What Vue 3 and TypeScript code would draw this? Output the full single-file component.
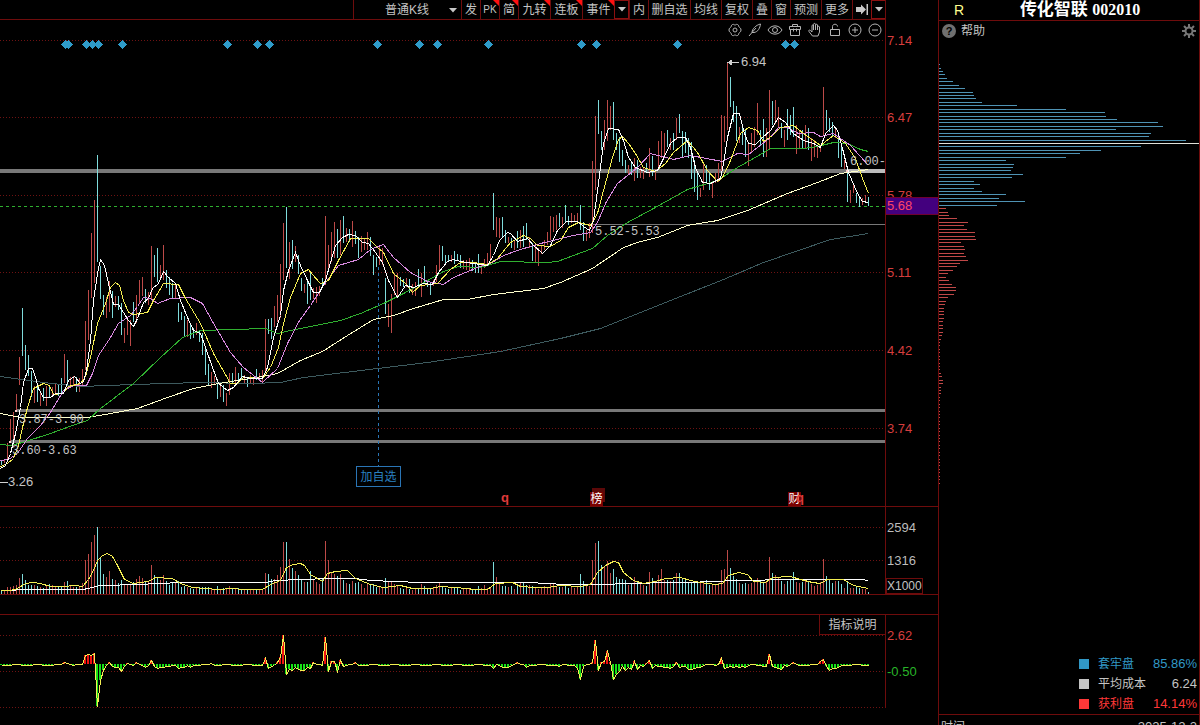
<script setup lang="ts">
type Pt = [number, number]

const tools = [
  { text: '发', size: 'one' }, { text: 'PK', size: 'one', hot: true }, { text: '简', size: 'one', hot: true },
  { text: '九转', size: 'two', hot: true }, { text: '连板', size: 'two', hot: true }, { text: '事件', size: 'two', hot: true },
  { text: '▼', size: 'drop' }, { text: '内', size: 'one' }, { text: '删自选', size: 'three' }, { text: '均线', size: 'two' },
  { text: '复权', size: 'two' }, { text: '叠', size: 'one' }, { text: '窗', size: 'one' }, { text: '预测', size: 'two' },
  { text: '更多', size: 'two' }, { text: '→', size: 'one' }, { text: '▼', size: 'drop' },
]

/* One token per trading day: direction, top of the bar, bottom of the bar. */
const candleText = `c460-465 r459-463 r443-462 r419-443 r412-447 r394-412 r357-385 c308-356 c345-370 c355-376
c371-397 r386-403 c385-402 r393-406 c388-401 r386-406 c385-397 r387-397 r383-395 c385-396
c378-393 r354-383 c360-385 r377-387 r376-385 c377-392 r378-392 r369-385 r321-370 r290-340
r233-298 r200-283 c155-262 c266-299 c295-315 r297-318 r281-312 c291-318 r296-307 c296-310
c303-335 r328-343 r320-335 r320-346 c302-322 r295-323 r280-303 r277-296 c289-303 r292-305
r246-300 c255-277 c248-282 r265-280 r245-280 c270-288 c277-295 c283-299 r283-298 c303-322
c312-320 c316-337 r320-337 c323-339 c328-338 r323-335 c330-342 c333-355 c346-375 c364-386
r372-388 r376-385 c382-399 r385-397 c385-402 r393-406 r373-395 c373-383 r367-383 c373-382
c368-380 r375-384 c377-387 r375-383 r377-385 c369-380 r373-380 r370-384 r319-373 c319-334
c318-339 r306-327 r295-322 r264-318 r223-280 c207-268 r242-279 c240-269 r246-262 c255-274
c278-291 r284-293 c282-304 c273-300 r288-299 r287-303 r286-296 c278-287 r216-285 r245-268
r232-262 r222-258 c229-258 r220-255 c216-243 r228-242 c229-242 r221-247 c231-244 c237-258
r236-252 r238-250 r232-250 c237-256 c255-275 c257-267 r245-265 r248-265 c278-314 r304-327
r294-333 r273-295 r273-297 c277-286 c279-287 r278-287 c279-293 r284-295 r282-296 c269-287
r273-297 c266-283 c280-287 c282-295 r280-286 r265-282 r245-270 c246-261 c255-263 c255-262
r255-262 c251-264 c254-261 c255-268 r260-269 r260-270 r258-270 c260-271 c262-273 c254-273
r263-274 r259-268 r253-266 r244-260 c193-230 r217-237 r218-238 c217-237 c230-243 r237-243
c238-248 r240-250 c231-248 r230-248 c226-247 c223-240 r237-248 c243-261 r244-262 r248-266
r245-254 r240-250 r232-245 r216-240 r217-232 r215-230 c213-227 r217-228 c205-223 c216-225
r213-223 r215-222 r213-223 c205-230 c222-241 r230-241 r223-238 r161-233 r116-190 c100-134
c131-150 r120-150 r100-141 r106-130 c102-140 c133-150 c137-162 c150-166 c160-173 r165-175
c163-175 r158-181 c160-178 r167-178 r168-179 c163-173 r148-177 c156-176 r169-180 r141-168
r131-158 r133-155 c130-147 r138-150 c133-150 r118-140 c114-133 c131-158 c132-153 c138-158
c142-179 c160-192 c172-200 r188-197 r162-190 c165-183 c172-190 r183-198 r173-183 r163-182
r115-172 r116-142 r63-130 c77-107 c101-122 c106-141 r127-143 c127-145 c130-157 r143-166
r133-153 r127-147 r103-135 c130-145 c119-157 r128-157 r90-150 c101-125 r100-124 r107-128
c123-138 r130-147 c109-140 c115-135 c107-137 r125-154 r130-148 c130-148 r125-148 c128-150
r138-161 r140-157 r147-158 r145-152 r87-135 c110-130 c118-132 c122-137 r129-138 c138-158
c143-167 r160-169 c167-202 r190-203 r185-193 c193-203 c197-207 r198-205 r195-202 c197-206`
const candles = candleText.trim().split(/\s+/).map((t, i) => {
  const [a, b] = t.slice(1).split('-').map(Number)
  return { up: t[0] === 'r', x: 1 + i * 3, top: a, bottom: b }
})
const candlePath = (up: boolean) =>
  candles.filter(c => c.up === up).map(c => `M${c.x} ${c.top}h1V${c.bottom}h-1z`).join('')

const volumes = `4 3 7 7 8 9 16 20 14 9 9 9 8 7 6 8 10 9 7 7 8 12 13 9 7 7 7 11 34 40
52 59 67 37 20 17 23 15 14 11 14 9 9 9 12 15 18 16 12 12 29 19 17 14 19 13 9 12 12 13
7 8 7 6 5 7 7 7 7 7 5 5 8 5 6 6 8 6 6 6 5 5 5 5 5 5 5 5 21 20
15 15 19 27 52 52 35 26 23 19 14 12 12 23 14 12 10 15 53 34 21 20 18 20 14 11 10 13 11 12
10 6 10 10 10 7 7 6 16 12 12 10 8 6 5 6 5 4 5 6 10 8 6 6 6 9 11 8 6 5
6 7 7 4 6 5 5 5 5 8 6 9 6 7 32 17 12 8 8 7 8 5 9 11 11 9 9 8 6 5
7 8 7 10 11 8 7 7 8 6 8 6 8 20 13 9 8 34 51 53 29 28 33 21 25 17 15 15 14 9
10 17 12 11 9 8 22 16 12 19 25 14 14 13 14 21 21 15 14 12 12 13 13 11 12 14 9 9 9 11
24 25 44 26 18 15 11 10 11 10 11 14 16 14 12 12 37 21 19 16 13 10 13 14 22 12 11 12 14 13
10 8 9 12 35 18 14 11 13 13 10 6 12 6 6 7 6 5 5 2`.trim().split(/\s+/).map(Number)
const volumePath = (up: boolean) =>
  volumes.map((v, i) => (candles[i]?.up === up ? `M${1 + i * 3} 594V${594 - v}h1V594z` : '')).join('')

const movingAverages = [
  { cls: 'slate', d: '0,376 43,382 80,386 133,384 200,382 250,383 280,382 303,377 377,368 427,362 500,351 560,338 600,328 660,304 723,279 763,262 830,239 868,233' },
  { cls: 'cream', d: '0,413 20,417 87,417 110,413 137,408 167,397 193,388 218,383 262,376 277,373 300,360 322,351 347,335 373,319 393,315 413,308 443,299 467,299 493,294 543,288 560,282 592,268 623,247 640,241 657,237 687,225 717,220 747,210 787,193 817,182 840,173 868,169' },
  { cls: 'green', d: '0,444 10,445 22,442 50,433 72,425 87,420 100,408 133,383 160,357 182,337 200,330 233,329 265,328 277,333 290,330 310,326 340,320 360,313 383,303 403,293 427,280 443,271 458,266 480,267 500,261 547,262 557,261 573,255 592,248 607,235 627,222 653,208 687,189 717,180 737,167 753,158 770,148 803,148 817,146 833,142 847,143 860,149 868,151' },
  { cls: 'violet', d: '0,460 8,459 17,453 27,438 40,425 50,412 63,390 73,385 86,385 92,373 98,355 110,337 118,323 130,315 137,306 143,297 150,298 157,303 170,298 190,297 202,303 213,323 230,352 243,367 262,382 277,368 287,343 299,320 310,305 323,285 338,265 358,259 370,249 383,244 393,257 410,272 427,281 443,284 453,277 477,267 490,263 503,255 520,249 540,243 573,235 590,232 597,222 605,203 617,183 637,167 650,153 673,159 690,155 722,161 737,153 748,154 770,137 778,127 787,127 798,133 813,132 820,136 833,133 850,145 868,165' },
  { cls: 'yellow', d: '0,466 7,463 13,458 18,445 22,427 27,407 33,388 43,383 49,385 53,394 62,393 68,386 80,383 85,377 90,357 97,323 105,303 110,287 115,282 119,285 123,300 128,312 133,314 147,312 153,300 163,283 178,284 185,298 200,323 213,353 230,383 237,383 243,377 262,378 270,367 278,347 283,323 290,297 300,273 308,269 312,274 320,283 328,280 338,260 350,238 368,238 377,247 383,252 393,273 405,283 412,292 420,285 437,283 450,269 460,262 473,262 487,264 497,258 510,242 523,235 530,238 537,245 550,246 560,240 568,227 578,222 590,225 597,213 603,190 612,157 618,139 622,136 628,143 635,153 643,167 655,171 665,163 673,152 687,140 697,152 707,170 717,181 722,177 730,160 740,133 748,127 757,130 763,141 772,135 780,127 793,125 803,133 820,145 833,135 845,143 855,158 862,178 868,193' },
  { cls: 'white', d: '0,468 5,465 10,453 15,433 20,407 23,382 28,368 32,368 35,377 38,388 43,397 50,397 55,393 63,393 68,380 74,376 80,383 83,381 86,370 90,340 93,300 97,273 100,259 104,265 108,283 113,304 118,304 123,312 128,320 133,326 137,318 143,302 148,298 152,288 158,283 163,271 168,277 175,283 180,300 187,317 193,330 200,333 205,347 212,367 218,383 227,390 233,387 242,376 250,378 262,378 267,367 273,337 280,315 283,290 288,270 295,252 300,265 307,280 313,292 319,292 325,280 330,262 335,245 342,237 348,234 355,235 362,242 368,243 375,252 382,262 388,280 397,297 405,285 413,287 423,283 432,284 438,272 447,261 453,259 460,261 473,263 487,265 493,255 499,240 507,232 510,233 517,241 527,238 533,245 542,253 550,245 557,230 566,221 577,221 583,226 589,230 593,220 598,183 603,143 608,128 618,129 623,140 628,157 635,167 647,172 657,170 663,158 670,143 677,137 685,137 690,147 695,167 702,182 710,183 720,178 723,163 727,137 733,113 739,113 743,130 748,143 755,144 762,137 770,130 778,117 785,122 793,133 803,140 813,143 820,147 825,133 833,125 837,130 842,148 848,172 857,193 862,201 868,202' },
]
const volumeAverages = [
  { cls: 'white', d: '0,590 13,590 17,589 83,589 100,585 140,584 155,583 185,582 265,582 275,580 300,579 330,578 355,578 370,580 395,581 420,582 530,582 545,583 565,584 610,584 620,583 680,582 720,581 730,580 800,579 860,579 868,580' },
  { cls: 'yellow', d: '0,590 10,590 17,588 25,583 32,582 40,583 50,586 63,586 75,585 82,586 88,579 93,570 97,560 102,555 107,553 112,556 117,565 124,579 133,583 140,582 148,581 155,577 172,578 180,583 192,587 205,588 217,589 232,588 243,589 262,589 270,584 280,580 286,567 293,564 300,563 304,565 310,574 322,581 327,573 335,571 347,570 355,578 370,584 383,587 400,585 412,588 430,588 440,586 455,587 475,589 487,589 495,583 512,582 520,586 535,587 547,587 560,585 580,586 590,584 597,572 605,565 613,561 618,562 623,572 633,580 643,583 655,581 665,578 680,577 690,580 700,582 715,584 722,583 728,575 738,572 747,574 753,581 765,582 772,577 790,576 800,579 812,582 820,583 827,579 843,579 853,585 868,588' },
]

/* Runs of the oscillator that leave the zero line: first day and values. */
const swings: [number, number[]][] = [
  [21, [2, 1, 0]],
  [28, [9, 10, 9, 11, -42, -16, -6, -1, 2, -2, -3, -3, -7, -2, 1, 0]],
  [45, [2, 0, -1, -3, -1, 4, -2, -4, -3, -3, -2, -2]],
  [59, [-4, -3, -3, -1, -3]],
  [70, [1]],
  [88, [6, -4, -2, -1, 2, 7, 29, -10, -5, -6, -3, -5, -6, -6, -3, -4, 2, 0, 0, -1, 27, -7, 3, 3, -7, 4, -2]],
  [118, [2]],
  [164, [-4, 0, -1, -3, -3, -3, -1, 0, 2]],
  [175, [-3, -1]],
  [186, [-2]],
  [191, [-1, -4, -15, -2, 0, 0, 2, 24, -6, 2, 3, 13, 2, -15, -10, -7, -2, -6, -3, -5, 3, -5, -1, -2, 1, 4, -4, -1, -2, -2, -3, -3, -4, -2, 2, -3, -2, -2, -5, -5, -4, -3, -3, -1]],
  [239, [0, 6, -4, -3, -2, -3, -2, -3, -2, -3, -1]],
  [254, [-2, -2, 10, -2, -3, -4, -5, -1, -2, 0, 2]],
  [272, [0, 3, 5, -2, -6, -4, -4, -3, -1]],
]
const oscillator: number[] = candles.map((_, i) => [-1, 0, -1, -1, 0, 0, -1][(i * 3) % 7])
swings.forEach(([start, vals]) => vals.forEach((v, k) => { oscillator[start + k] = v }))
const oscPath = (up: boolean) =>
  oscillator.map((v, i) => (v !== 0 && v > 0 === up ? `M${1 + i * 3} 664V${664 - v}` : '')).join('')
const oscLine = oscillator.map((v, i) => `${1 + i * 3},${664 - v}`).join(' ')

const diamonds = [65, 68, 86, 92, 98, 122, 227, 257, 269, 377, 419, 437, 488, 581, 596, 677, 785, 794]
const diamondPath = diamonds.map(x => `M${x - 4} 44.5l4.5 -4.5 4.5 4.5 -4.5 4.5z`).join('')

/* Chip distribution: one row per price step, blue above the last price and red below it. */
const blue = [1, 2, 4, 6, 8, 14, 20, 26, 34, 35, 37, 43, 78, 127, 166, 167, 178, 219, 224, 177, 212, 210, 247, 260, 202, 162, 141, 127, 67, 75, 74, 72, 84, 73, 35, 41, 35, 43, 67, 60, 86, 58]
const red = [7, 9, 10, 18, 29, 25, 28, 36, 36, 37, 22, 25, 26, 25, 27, 29, 21, 18, 14, 9, 7, 10, 13, 17, 17, 15, 9, 7, 6, 5, 5, 5, 5, 4, 4, 4, 4, 3, 2,
  1, 1, 1, 1, 1, 1, 1, 1, 1, 2, 3, 4, 4, 2, 2, 2, ...Array<number>(26).fill(1)]
const chipY = (k: number) => Math.round(64.1 + k * 3.43)
const chips = [...blue, ...red].map((w, k) => ({ w, y: chipY(k), cls: k === 23 ? 'mean' : k < 42 ? 'loss' : 'gain' }))

/* Converts a chart coordinate to a share of its pane. */
const pct = (v: number, from: number, span: number) => `${((v - from) / span) * 100}%`
const at = ([x, y]: Pt) => ({ left: pct(x, 0, 885), top: pct(y, 20, 486) })

const priceTicks = [{ t: '7.14', y: 42 }, { t: '6.47', y: 119 }, { t: '5.78', y: 197 }, { t: '5.11', y: 274 }, { t: '4.42', y: 352 }, { t: '3.74', y: 430 }]
const notes: { t: string; p: Pt; mono?: boolean }[] = [
  { t: '6.94', p: [741, 62] }, { t: '3.26', p: [8, 482] },
  { t: '6.00-', p: [850, 162], mono: true }, { t: '5.52-5.53', p: [595, 232], mono: true },
  { t: '3.87-3.90', p: [19, 420], mono: true }, { t: '3.60-3.63', p: [12, 451], mono: true },
]
const legend = [
  { name: '套牢盘', value: '85.86%', cls: 'loss' }, { name: '平均成本', value: '6.24', cls: 'mean' }, { name: '获利盘', value: '14.14%', cls: 'gain' },
]
</script>

<template>
  <div class="terminal">
    <main class="charts">
      <nav class="toolbar">
        <select class="period" aria-label="K线类型"><option>普通K线</option></select>
        <svg class="caret" viewBox="0 0 8 5"><path d="M0 0h8L4 4.5z" /></svg>
        <button v-for="(b, i) in tools" :key="i" type="button" :class="[b.size, { hot: b.hot, small: b.text === 'PK' }]">
          <svg v-if="b.text === '▼'" width="8" height="5" viewBox="0 0 8 5"><path d="M0 0h8L4 4.5z" /></svg>
          <svg v-else-if="b.text === '→'" width="13" height="11" viewBox="0 0 13 11"><path d="M0 3h5V0.500L10 5.500 5 10.500V8H0zM10.500 0h1.500v11h-1.500z" /></svg>
          <template v-else>{{ b.text }}</template>
        </button>
      </nav>

      <section class="pane price">
        <div class="plot">
          <svg class="canvas" viewBox="0 20 885 486" preserveAspectRatio="none">
            <path class="grid" d="M0 40.500H885M0 117.500H885M0 195.500H885M0 272.500H885M0 350.500H885M0 428.500H885" />
            <path class="band" d="M0 169h885v4H0zM16 409h869v3H16zM10 440h875v3H10zM592 224h293v1H592z" />
            <path class="band-lit" d="M847 169h38v4h-38z" />
            <path class="last" d="M0 206.500H885" />
            <path class="up" :d="candlePath(true)" />
            <path class="down" :d="candlePath(false)" />
            <g transform="translate(0.5 0.5)">
              <polyline v-for="m in movingAverages" :key="m.cls" :class="['ma', m.cls]" :points="m.d" />
            </g>
            <path class="added" d="M378.500 267V466" />
            <path class="diamond" :d="diamondPath" />
            <path class="arrow" d="M728 62.500H739M0 482.500H8M728 62.500l3 -2v4z" />
            <path class="pin" d="M15 410h2v2h-2zM9 441h2v2h-2zM846 170h2v2h-2z" />
          </svg>
          <span v-for="n in notes" :key="n.t" :class="['note', { mono: n.mono }]" :style="at(n.p)">{{ n.t }}</span>
          <button type="button" class="add" :style="at([356, 466])">加自选</button>
          <b class="mark" :style="at([501, 499])">q</b>
          <b class="tag back" :style="at([592, 488])"></b>
          <b class="tag" :style="at([590, 492])">榜</b>
          <b class="tag" :style="at([788, 492])">财</b>
          <b class="mark" :style="at([796, 499])">q</b>
          <div class="icons">
            <button type="button" aria-label="设置"><svg viewBox="0 0 16 16"><path d="M8 3C9 3 9 2 10.500 2.500S11.500 4.500 12 5S14 6 14 8S12.500 10.500 12 11S12 13 10.500 13.500S9 13 8 13S7 14 5.500 13.500S4.500 11.500 4 11S2 10 2 8S3.500 5.500 4 5S4 3 5.500 2.500S7 3 8 3z" /><circle cx="8" cy="8" r="2" /></svg></button>
            <button type="button" aria-label="画线"><svg viewBox="0 0 16 16"><path d="M2 14L5 10.500C5 7 9 3 13.500 2C13 6 11 10 7 10.500H5L9 6" /></svg></button>
            <button type="button" aria-label="显示"><svg viewBox="0 0 16 16"><path d="M1 8C4 2.500 12 2.500 15 8C12 13.500 4 13.500 1 8z" /><circle cx="8" cy="8" r="2.500" /></svg></button>
            <button type="button" aria-label="工具箱"><svg viewBox="0 0 16 16"><path d="M5.500 4.500v-2h5v2M2.500 4.500h11v3h-11zM3.500 7.500v6h9v-6M6.500 6.500v3M9.500 6.500v3" /></svg></button>
            <button type="button" aria-label="拖动"><svg viewBox="0 0 16 16"><path d="M5.500 14L2 9.500C1 8 3 7.500 4 9L5 10V4C5 2.500 6.500 2.500 6.500 4V8V2.500C6.500 1 8.500 1 8.500 2.500V8V3C8.500 2 10.500 2 10.500 3V8V5C10.500 4 12.500 4 12.500 5V10L11 14z" /></svg></button>
            <button type="button" aria-label="锁定"><svg viewBox="0 0 16 16"><path d="M3.500 7.500h9v6h-9zM5.500 7.500V4.500C5.500 1.500 10.500 1.500 10.500 4.500" /></svg></button>
            <button type="button" aria-label="放大"><svg viewBox="0 0 16 16"><circle cx="8" cy="8" r="6" /><path d="M5 8h6M8 5v6" /></svg></button>
            <button type="button" aria-label="缩小"><svg viewBox="0 0 16 16"><circle cx="8" cy="8" r="6" /><path d="M5 8h6" /></svg></button>
          </div>
        </div>
        <div class="axis">
          <span v-for="k in priceTicks" :key="k.t" class="tick" :style="{ top: pct(k.y, 20, 486) }">{{ k.t }}</span>
          <span class="tick now" :style="{ top: pct(206, 20, 486) }">5.68</span>
        </div>
      </section>

      <section class="pane volume">
        <div class="plot">
          <svg class="canvas" viewBox="0 507 885 87" preserveAspectRatio="none">
            <path class="grid" d="M0 527.500H885M0 560.500H885" />
            <path class="up" :d="volumePath(true)" />
            <path class="down" :d="volumePath(false)" />
            <g transform="translate(0.5 0.5)">
              <polyline v-for="m in volumeAverages" :key="m.cls" :class="['ma', m.cls]" :points="m.d" />
            </g>
          </svg>
        </div>
        <div class="axis">
          <span class="tick grey" :style="{ top: pct(528, 507, 87) }">2594</span>
          <span class="tick grey" :style="{ top: pct(561, 507, 87) }">1316</span>
          <span class="unit">X1000</span>
        </div>
      </section>

      <section class="pane osc">
        <div class="plot">
          <svg class="canvas" viewBox="0 615 885 93" preserveAspectRatio="none">
            <path class="grid" d="M0 635.500H885M0 671.500H885M0 707.500H885" />
            <path class="osc-up" :d="oscPath(true)" />
            <path class="osc-down" :d="oscPath(false)" />
            <g transform="translate(0.5 0.5)"><polyline class="ma yellow" :points="oscLine" /></g>
          </svg>
          <button type="button" class="explain">指标说明</button>
        </div>
        <div class="axis">
          <span class="tick" :style="{ top: pct(636, 615, 93) }">2.62</span>
          <span class="tick lime" :style="{ top: pct(672, 615, 93) }">-0.50</span>
        </div>
      </section>
    </main>

    <aside class="side">
      <header class="stock">
        <span class="flag">R</span>
        <h1>传化智联 <span>002010</span></h1>
      </header>
      <div class="help">
        <button type="button"><i>?</i>帮助</button>
        <button type="button" aria-label="设置">
          <svg width="14" height="14" viewBox="0 0 14 14"><circle cx="7" cy="7" r="3.500" /><path d="M7 0v3M7 11v3M0 7h3M11 7h3M2 2l2.200 2.200M9.800 9.800L12 12M2 12l2.200 -2.200M9.800 4.200L12 2" /></svg>
        </button>
      </div>
      <svg class="chips" viewBox="0 41 260 613" preserveAspectRatio="none">
        <rect v-for="c in chips" :key="c.y" :class="c.cls" x="0" :y="c.y" :width="c.w" height="1" />
      </svg>
      <ul class="legend">
        <li v-for="l in legend" :key="l.name" :class="l.cls"><i></i><span>{{ l.name }}</span><b>{{ l.value }}</b></li>
      </ul>
      <footer class="time"><span>时间</span><span>2025-12-2</span></footer>
    </aside>
  </div>
</template>

<style>
body { margin: 0; background: #000; }
</style>

<style scoped>
.terminal {
  --line: #6e0c0c;
  display: grid;
  grid-template-columns: minmax(0, 1fr) 262px;
  height: 100vh;
  overflow: hidden;
  background: #000;
  color: #c4c4c4;
  font: 12px/16px "Liberation Sans", "Noto Sans CJK SC", sans-serif;
}
button, select { margin: 0; padding: 0; border: 0; background: none; color: inherit; font: inherit; border-radius: 0; }
.charts { display: grid; grid-template-rows: 20px 486fr 89fr 19px 94fr 17px; min-height: 0; }
.toolbar { display: flex; justify-content: flex-end; box-sizing: border-box; margin-right: 52px; border-bottom: 1px solid var(--line); }
.toolbar select { width: 108px; padding-left: 31px; border-left: 1px solid var(--line); appearance: none; }
.toolbar .caret { width: 8px; height: 5px; margin: 8px 4px 0 -12px; pointer-events: none; }
.toolbar svg { flex: none; fill: #c8c8c8; }
.toolbar button { position: relative; box-sizing: border-box; border-left: 1px solid var(--line); display: flex; align-items: center; justify-content: center; white-space: nowrap; }
.one { width: 19px; }
.two { width: 31px; }
.two.hot { width: 32px; }
.three { width: 42px; }
.toolbar .drop { width: 15px; border: 1px solid #8c1010; }
.toolbar .small { font-size: 10px; }
.hot::after { content: ""; position: absolute; top: 0; right: 0; border-top: 6px solid #ff1010; border-left: 6px solid transparent; }

.pane { display: grid; grid-template-columns: minmax(0, 1fr) 53px; min-height: 0; box-sizing: border-box; }
.volume { border-top: 1px solid var(--line); border-bottom: 1px solid var(--line); }
.osc { grid-row: 5; border-top: 1px solid var(--line); }
.plot, .axis { position: relative; min-height: 0; }
.plot { overflow: hidden; }
.axis { border-left: 1px solid var(--line); }
.price .axis::before { content: ""; position: absolute; left: -1px; bottom: 100%; height: 20px; border-left: 1px solid var(--line); }
.canvas { position: absolute; inset: 0; width: 100%; height: 100%; shape-rendering: crispEdges; }
.canvas path, .canvas polyline { vector-effect: non-scaling-stroke; fill: none; }
.canvas .grid { stroke: #6e1212; stroke-dasharray: 1 2; }
.canvas .band { fill: #787878; }
.canvas .band-lit { fill: #bcbcbc; }
.canvas .last { stroke: #2fae2f; stroke-dasharray: 3 3; }
.canvas .up { fill: #bd4a48; }
.canvas .down { fill: #7fdcdc; }
.canvas .ma { stroke-width: 1; }
.slate { stroke: #3d5a5e; }
.cream { stroke: #ffffcc; }
.green { stroke: #30b030; }
.violet { stroke: #d98ae0; }
.yellow { stroke: #f4ee52; }
.white { stroke: #fff; }
.canvas .added { stroke: #2a75b5; stroke-dasharray: 3 3; }
.canvas .diamond { fill: #2f9bc9; }
.canvas .arrow { stroke: #d0d0d0; fill: #d0d0d0; }
.canvas .pin { fill: #ffd0d0; }
.canvas .osc-up { stroke: #f01010; stroke-width: 2; }
.canvas .osc-down { stroke: #18e018; stroke-width: 2; }

.note, .mark, .tag, .add { position: absolute; white-space: nowrap; }
.note { margin-top: -8px; font-size: 13px; }
.note.mono { font: 12px/16px "Liberation Mono", monospace; }
.mark { margin-top: -9px; color: #e03a3a; font-size: 13px; }
.tag { width: 13px; height: 14px; background: #7a0000; color: #fff; font-weight: 400; line-height: 14px; text-align: center; }
.tag.back { background: #5c0808; }
.add { box-sizing: border-box; width: 45px; height: 21px; border: 1px solid #2a75b5; background: #000; color: #2a80c0; }
.icons { position: absolute; top: 2px; right: 2px; display: flex; gap: 4px; }
.icons button { width: 16px; height: 16px; }
.icons svg { display: block; width: 16px; height: 16px; fill: none; stroke: #b4b4b4; stroke-width: 1; }

.tick { position: absolute; left: 1px; margin-top: -9px; color: #d63e3e; font-size: 13px; }
.tick.grey { margin-top: -8px; color: #bcbcbc; }
.osc .tick { margin-top: -8px; }
.tick.lime { color: #28b428; }
.tick.now { left: 0; right: 0; padding-left: 1px; border-top: 1px solid #700030; border-bottom: 1px solid #700030; background: #43007e; color: #ff4668; }
.unit { position: absolute; left: 0; bottom: 0; height: 14px; border: 1px solid var(--line); line-height: 14px; font-size: 12px; }
.explain { position: absolute; top: 0; right: 0; width: 66px; height: 20px; border-left: 1px solid var(--line); border-bottom: 1px solid var(--line); background: #000; }

.side { display: flex; flex-direction: column; min-height: 0; border-left: 1px solid var(--line); border-right: 1px solid var(--line); }
.stock { position: relative; flex: none; height: 20px; border-bottom: 1px solid var(--line); }
.flag { position: absolute; left: 15px; top: 2px; color: #ffff90; font-size: 14px; }
h1 { margin: 0; padding-left: 22px; text-align: center; color: #fff; font: bold 17px/20px "Liberation Serif", "Noto Sans CJK SC", serif; }
h1 span { font-size: 16px; }
.help { display: flex; flex: none; align-items: center; justify-content: space-between; height: 20px; padding: 0 3px; }
.help button { display: flex; align-items: center; gap: 5px; }
.help i { width: 14px; height: 14px; border-radius: 7px; background: #707070; color: #000; font: bold 11px/14px "Liberation Sans", sans-serif; text-align: center; }
.help svg { fill: none; stroke: #777; stroke-width: 2; }
.chips { flex: 1; width: 100%; min-height: 0; shape-rendering: crispEdges; }
.chips .loss { fill: #4f93b4; }
.chips .mean { fill: #e0e0d8; }
.chips .gain { fill: #c04848; }
.legend { flex: none; margin: 0; padding: 0 2px 0 0; list-style: none; }
.legend li { display: flex; align-items: center; height: 20px; padding-left: 140px; }
.legend i { width: 10px; height: 10px; margin-right: 9px; background: currentColor; }
.legend span { flex: 1; white-space: nowrap; }
.legend b { font-weight: 400; font-size: 13px; }
.legend .loss { color: #3198c6; }
.legend .mean { color: #c4c4c4; }
.legend .gain { color: #ff3838; }
.time { display: flex; flex: none; box-sizing: border-box; height: 11px; justify-content: space-between; overflow: hidden; border-top: 1px solid var(--line); padding: 4px 2px 0; }
.time span:last-child { font-size: 13px; }
</style>
